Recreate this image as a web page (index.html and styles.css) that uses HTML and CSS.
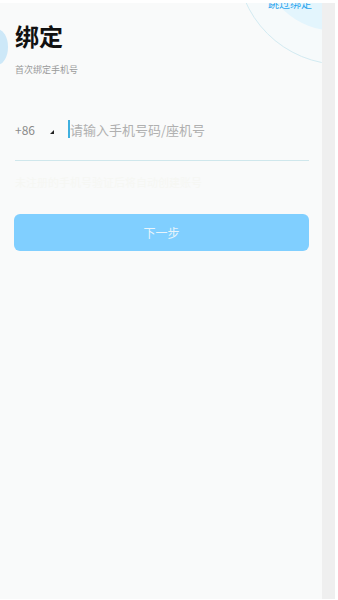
FILE: index.html
```html
<!DOCTYPE html>
<html lang="zh-CN">
<head>
    <meta charset="UTF-8">
    <meta name="viewport" content="width=device-width, initial-scale=1.0">
    <title>绑定</title>
    <link rel="stylesheet" href="styles.css">
</head>
<body>

<div class="frame">
    <div class="screen">
        <!-- background decoration -->
        <div class="bubble-ring"></div>
        <div class="bubble"></div>
        <div class="bubble-left"></div>
        <div class="skip">跳过绑定</div>

        <div class="content">
            <h1>绑定</h1>
            <p class="sub">首次绑定手机号</p>

            <div class="phone-row">
                <span class="code">+86</span>
                <span class="arrow"></span>
                <span class="cursor"></span>
                <span class="placeholder">请输入手机号码/座机号</span>
            </div>
            <div class="ghost">未注册的手机号验证后将自动创建账号</div>

            <button class="next">下一步</button>
        </div>
    </div>
    <div class="scrollbar"></div>
</div>

</body>
</html>
```

FILE: styles.css
```css
body {
    margin: 0;
    padding: 0;
    background: #ffffff;
    font-family: "Noto Sans CJK SC", "Noto Sans", sans-serif;
    overflow: hidden;
}

.frame {
    display: flex;
    height: 596px;
    padding-top: 3px;
}

.screen {
    position: relative;
    width: 322px;
    background-color: #f9fafa;
    overflow: hidden;
}

.scrollbar {
    width: 13px;
    background-color: #efefef;
}

/* Decorations */
.bubble-ring {
    position: absolute;
    top: -150px;
    left: 236px;
    width: 210px;
    height: 210px;
    border-radius: 50%;
    border: 1px solid #d3ebf2;
    background: rgba(244, 250, 252, 0.5);
}

.bubble {
    position: absolute;
    top: -112px;
    left: 262px;
    width: 150px;
    height: 140px;
    border-radius: 50%;
    background-color: #e3f5fd;
}

.bubble-left {
    position: absolute;
    top: 26px;
    left: -14px;
    width: 22px;
    height: 36px;
    border-radius: 50%;
    background-color: #cde8f8;
}

.skip {
    position: absolute;
    top: -8px;
    left: 268px;
    font-size: 11px;
    color: #2aa4ee;
}

.content {
    position: relative;
    padding: 0 13px 0 15px;
}

h1 {
    margin: 0;
    padding-top: 17px;
    font-size: 24px;
    line-height: 32px;
    font-weight: bold;
    color: #111111;
}

.sub {
    margin: 12px 0 0;
    font-size: 9px;
    line-height: 12px;
    color: #9a9a9a;
}

.phone-row {
    display: flex;
    align-items: center;
    margin-top: 37px;
    height: 32px;
    padding-bottom: 15px;
    border-bottom: 1px solid #cfe7ec;
}

.code {
    font-size: 12px;
    color: #8a8a8a;
    width: 35px;
}

.arrow {
    width: 0;
    height: 0;
    border-left: 4px solid transparent;
    border-bottom: 4px solid #222222;
    margin-top: 5px;
    margin-right: 14px;
}

.cursor {
    width: 2px;
    height: 18px;
    background-color: #3fb0df;
}

.placeholder {
    font-size: 13px;
    color: #b0b0b0;
}

.ghost {
    margin-top: 13px;
    font-size: 11px;
    color: #f6f7f3;
}

.next {
    display: block;
    width: 295px;
    height: 37px;
    margin-top: 24px;
    margin-left: -1px;
    border: none;
    border-radius: 6px;
    background-color: #80cfff;
    color: #e8f4fb;
    font-family: "Noto Sans CJK SC", sans-serif;
    font-size: 12px;
}
```
